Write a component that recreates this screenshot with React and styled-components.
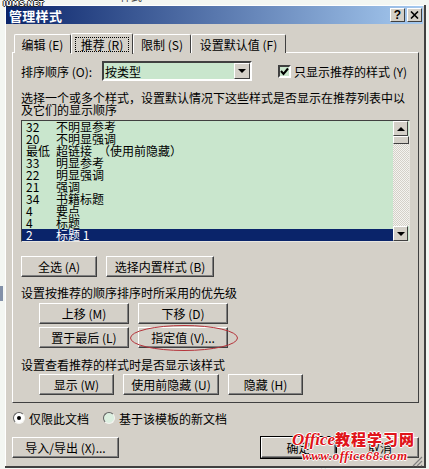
import React from 'react'
import styled, { createGlobalStyle } from 'styled-components'

const rows = [
  ['32', '不明显参考'],
  ['20', '不明显强调'],
  ['最低', '超链接　（使用前隐藏）'],
  ['33', '明显参考'],
  ['22', '明显强调'],
  ['21', '强调'],
  ['34', '书籍标题'],
  ['4', '要点'],
  ['4', '标题'],
  ['2', '标题 1', true],
]

function App() {
  return (
    <Page>
      <GlobalStyle />
      <Stamp>IUMS.NET</Stamp>
      <SideMark />
      <CutOffTop>样式</CutOffTop>
      <Dialog>
        <TitleBar>
          <Title>管理样式</Title>
          <TitleButton>?</TitleButton>
          <TitleButton>
            <svg width="9" height="8" viewBox="0 0 9 8">
              <path d="M1 0.5 L8 7.5 M8 0.5 L1 7.5" stroke="#000" strokeWidth="1.6" />
            </svg>
          </TitleButton>
        </TitleBar>

        <Body>
          <Tabs>
            <Tab $w={57}>编辑 (E)</Tab>
            <Tab $w={62} $active><FocusLabel>推荐 (R)</FocusLabel></Tab>
            <Tab $w={58}>限制 (S)</Tab>
            <Tab $w={95}>设置默认值 (F)</Tab>
          </Tabs>

          <Panel>
            <SortRow>
              <SortLabel>排序顺序 (O):</SortLabel>
              <Select>
                <span>按类型</span>
                <ArrowButton $size={16}><Arrow /></ArrowButton>
              </Select>
              <Check>
                <svg width="9" height="9" viewBox="0 0 9 9">
                  <path d="M1 4 L3.5 7 L8 1.5" fill="none" stroke="#000" strokeWidth="2" />
                </svg>
              </Check>
              <span>只显示推荐的样式 (Y)</span>
            </SortRow>

            <Description>
              选择一个或多个样式，设置默认情况下这些样式是否显示在推荐列表中以及它们的显示顺序
            </Description>

            <ListBox>
              <Rows>
                {rows.map(([num, name, selected], i) => (
                  <Row key={i} $selected={selected}>
                    <Num>{num}</Num>
                    <span>{name}</span>
                  </Row>
                ))}
              </Rows>
              <ScrollBar>
                <ArrowButton $size={15}><Arrow $up /></ArrowButton>
                <Thumb />
                <Track />
                <ArrowButton $size={15}><Arrow /></ArrowButton>
              </ScrollBar>
            </ListBox>

            <ButtonRow $top={14}>
              <Button $w={76}>全选 (A)</Button>
              <Button $w={108}>选择内置样式 (B)</Button>
            </ButtonRow>

            <Caption $top={8}>设置按推荐的顺序排序时所采用的优先级</Caption>
            <ButtonGrid>
              <Button $w={90}>上移 (M)</Button>
              <Button $w={90}>下移 (D)</Button>
              <Button $w={90}>置于最后 (L)</Button>
              <Button $w={90}>指定值 (V)...</Button>
              <Ellipse width="110" height="28" viewBox="0 0 110 28">
                <ellipse cx="55" cy="14" rx="53.5" ry="12.5" fill="none" stroke="#b5333a" strokeWidth="1" />
              </Ellipse>
            </ButtonGrid>

            <Caption $top={9}>设置查看推荐的样式时是否显示该样式</Caption>
            <ButtonRow $top={1} $left={18}>
              <Button $w={75}>显示 (W)</Button>
              <Button $w={96}>使用前隐藏 (U)</Button>
              <Button $w={75}>隐藏 (H)</Button>
            </ButtonRow>
          </Panel>

          <RadioRow>
            <Radio $checked />
            <RadioText>仅限此文档</RadioText>
            <Radio />
            <span>基于该模板的新文档</span>
          </RadioRow>

          <Footer>
            <Button $w={107}>导入/导出 (X)...</Button>
            <FooterRight>
              <Button $w={75} $default>确定</Button>
              <Button $w={78}>取消</Button>
            </FooterRight>
          </Footer>
          <Grip width="12" height="12" viewBox="0 0 12 12">
            <path d="M11 2 L2 11 M11 6 L6 11 M11 10 L10 11" stroke="#808080" strokeWidth="1.2" />
          </Grip>
        </Body>
      </Dialog>

      <Watermark>
        <WatermarkTitle><i>Office</i>教程学习网</WatermarkTitle>
        <WatermarkUrl>www.office68.com</WatermarkUrl>
      </Watermark>
      <CutOff>样式集 样式</CutOff>
    </Page>
  )
}

const GlobalStyle = createGlobalStyle`
  html, body {
    margin: 0;
    padding: 0;
  }
  body {
    font-family: "Noto Sans CJK SC", "Liberation Sans", sans-serif;
    font-size: 12px;
    color: #000;
  }
`

const Page = styled.div`
  position: relative;
  width: 429px;
  height: 469px;
  overflow: hidden;
  box-sizing: border-box;
  padding: 5px 3px 0 5px;
  background: #f3f6f2;
`

const Stamp = styled.div`
  position: absolute;
  left: 3px;
  top: 0;
  z-index: 2;
  font: bold 7px/8px "DejaVu Sans", sans-serif;
  letter-spacing: 0.3px;
  color: #fff;
  text-shadow: 1px 0 #222, -1px 0 #222, 0 1px #222, 0 -1px #222;
`

const SideMark = styled.div`
  position: absolute;
  left: 0;
  top: 286px;
  width: 3px;
  height: 15px;
  background: #8290a8;
`

const CutOffTop = styled.div`
  position: absolute;
  left: 120px;
  top: -12px;
  font-size: 11px;
  color: #444;
`

const Dialog = styled.div`
  box-sizing: border-box;
  height: 463px;
  padding: 1px;
  background: #d4d0c8;
  border-right: 2px solid #404040;
  border-bottom: 2px solid #404040;
  box-shadow: inset 1px 1px 0 #fff;
`

const TitleBar = styled.div`
  display: flex;
  align-items: center;
  gap: 2px;
  height: 18px;
  padding: 0 1px 0 3px;
  background: linear-gradient(90deg, #0a246a, #a6caf0);
`

const Title = styled.div`
  flex: 1;
  font-size: 13px;
  font-weight: 700;
  color: #fff;
  letter-spacing: 0.3px;
`

const TitleButton = styled.div`
  display: flex;
  align-items: center;
  justify-content: center;
  width: 15px;
  height: 14px;
  box-sizing: border-box;
  background: #d4d0c8;
  border: 1px solid;
  border-color: #fff #404040 #404040 #fff;
  font: bold 12px/1 "Liberation Sans", sans-serif;
`

const Body = styled.div`
  position: relative;
  padding: 9px 4px 0 6px;
`

const Tabs = styled.div`
  display: flex;
  align-items: flex-end;
  height: 20px;
  padding-left: 2px;
  position: relative;
  z-index: 1;
  margin-bottom: -1px;
`

const Tab = styled.div`
  box-sizing: border-box;
  display: flex;
  align-items: center;
  justify-content: center;
  flex: none;
  width: ${(p) => p.$w}px;
  height: ${(p) => (p.$active ? 21 : 19)}px;
  margin-bottom: ${(p) => (p.$active ? -1 : 0)}px;
  white-space: nowrap;
  background: #d4d0c8;
  border-top: 1px solid #fff;
  border-left: 1px solid #fff;
  border-right: 1px solid #404040;
  border-radius: 2px 2px 0 0;
`

const FocusLabel = styled.span`
  display: block;
  width: 54px;
  line-height: 15px;
  text-align: center;
  outline: 1px dotted #000;
  outline-offset: -1px;
`

const Panel = styled.div`
  box-sizing: border-box;
  height: 351px;
  padding: 8px 9px 0 8px;
  background: #d4d0c8;
  border: 1px solid;
  border-color: #fff #404040 #404040 #fff;
`

const SortRow = styled.div`
  display: flex;
  align-items: center;
  height: 20px;
`

const SortLabel = styled.span`
  width: 81px;
`

const sunken = `
  border: 2px solid;
  border-color: #404040 #fff #fff #404040;
  box-sizing: border-box;
`

const Select = styled.div`
  ${sunken}
  display: flex;
  align-items: center;
  justify-content: space-between;
  width: 150px;
  height: 20px;
  padding: 0 0 0 1px;
  margin-right: 26px;
  background: #c9e6cd;
`

const ArrowButton = styled.div`
  display: flex;
  align-items: center;
  justify-content: center;
  flex: none;
  box-sizing: border-box;
  width: ${(p) => p.$size}px;
  height: ${(p) => p.$size}px;
  background: #d4d0c8;
  border: 1px solid;
  border-color: #fff #404040 #404040 #fff;
`

const Arrow = styled.div`
  width: 0;
  height: 0;
  border-left: 4px solid transparent;
  border-right: 4px solid transparent;
  ${(p) => (p.$up ? 'border-bottom: 4px solid #000;' : 'border-top: 4px solid #000;')}
`

const Check = styled.div`
  ${sunken}
  display: flex;
  align-items: center;
  justify-content: center;
  width: 13px;
  height: 13px;
  margin-right: 3px;
  background: #c9e6cd;
`

const Description = styled.div`
  width: 386px;
  margin-top: 11px;
  line-height: 12px;
`

const ListBox = styled.div`
  box-sizing: border-box;
  display: flex;
  width: 389px;
  height: 122px;
  margin-top: 4px;
  overflow: hidden;
  background: #c9e6cd;
  border-top: 1px solid #404040;
  border-left: 1px solid #404040;
  border-right: 1px solid #e8e6e0;
  border-bottom: 1px solid #e8e6e0;
`

const Rows = styled.div`
  flex: 1;
`

const Row = styled.div`
  display: flex;
  height: 12px;
  line-height: 11px;
  white-space: nowrap;
  padding-left: 4px;
  color: ${(p) => (p.$selected ? '#fff' : '#000')};
  background: ${(p) => (p.$selected ? '#0a246a' : 'transparent')};
`

const Num = styled.span`
  width: 30px;
`

const ScrollBar = styled.div`
  display: flex;
  flex-direction: column;
  width: 16px;
`

const Thumb = styled.div`
  height: 8px;
  box-sizing: border-box;
  background: #d4d0c8;
  border: 1px solid;
  border-color: #fff #404040 #404040 #fff;
`

const Track = styled.div`
  flex: 1;
  background-color: #e8e6e0;
  background-image: repeating-conic-gradient(#d4d0c8 0 25%, #f4f4f0 0 50%);
  background-size: 2px 2px;
`

const ButtonRow = styled.div`
  display: flex;
  gap: 9px;
  margin-top: ${(p) => p.$top}px;
  margin-left: ${(p) => p.$left || 0}px;
`

const Button = styled.div`
  display: flex;
  align-items: center;
  justify-content: center;
  flex: none;
  box-sizing: border-box;
  width: ${(p) => p.$w}px;
  height: 21px;
  white-space: nowrap;
  background: #d4d0c8;
  border: 1px solid;
  border-color: #fff #404040 #404040 #fff;
  box-shadow: inset -1px -1px 0 #808080;
  ${(p) => p.$default && 'outline: 1px solid #000;'}
`

const Caption = styled.div`
  margin-top: ${(p) => p.$top}px;
  line-height: 16px;
`

const ButtonGrid = styled.div`
  position: relative;
  display: grid;
  grid-template-columns: 90px 90px;
  gap: 3px 9px;
  margin-top: 2px;
  margin-left: 18px;
`

const Ellipse = styled.svg`
  position: absolute;
  left: 90px;
  top: 21px;
`

const RadioRow = styled.div`
  display: flex;
  align-items: center;
  height: 16px;
  margin-top: 7px;
  padding-left: 1px;
`

const Radio = styled.div`
  box-sizing: border-box;
  display: flex;
  align-items: center;
  justify-content: center;
  width: 12px;
  height: 12px;
  margin-right: 4px;
  border-radius: 50%;
  border: 1px solid;
  border-color: #606060 #f4f4f0 #f4f4f0 #606060;
  background: ${(p) => (p.$checked ? '#fff' : '#dcefe0')};
  &::after {
    content: "";
    width: 4px;
    height: 4px;
    border-radius: 50%;
    background: ${(p) => (p.$checked ? '#000' : 'transparent')};
  }
`

const RadioText = styled.span`
  margin-right: 14px;
`

const Footer = styled.div`
  display: flex;
  justify-content: space-between;
  margin-top: 11px;
`

const FooterRight = styled.div`
  display: flex;
  gap: 5px;
`

const Grip = styled.svg`
  position: absolute;
  right: 0;
  bottom: -9px;
`

const Watermark = styled.div`
  position: absolute;
  left: 292px;
  top: 430px;
  z-index: 3;
  color: #e0141a;
  text-shadow: 1px 0 #fff, -1px 0 #fff, 0 1px #fff, 0 -1px #fff;
`

const WatermarkTitle = styled.div`
  font-size: 15px;
  line-height: 17px;
  font-weight: 900;
  letter-spacing: 1px;
  white-space: nowrap;
  i {
    font-family: "Liberation Serif", serif;
    font-size: 17px;
    font-weight: 700;
    letter-spacing: 0;
  }
`

const WatermarkUrl = styled.div`
  margin-left: 10px;
  margin-top: 1px;
  font: italic 700 13px/13px "Liberation Serif", serif;
  letter-spacing: 0.5px;
  white-space: nowrap;
`

const CutOff = styled.div`
  position: absolute;
  left: 274px;
  top: 465px;
  font-size: 13px;
  font-weight: 700;
  letter-spacing: 9px;
  white-space: nowrap;
`

export default App
